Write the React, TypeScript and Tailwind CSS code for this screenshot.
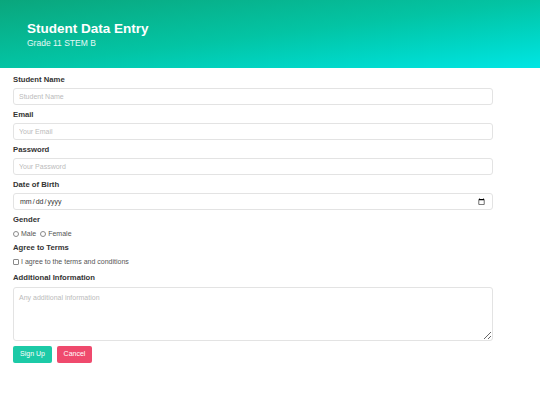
export default function App() {
  return (
    <div className="min-h-[405px] w-[540px] bg-white font-['Liberation_Sans',Arial,sans-serif] text-[#333]">
      {/* header */}
      <header className="flex h-[68px] flex-col justify-center bg-gradient-to-br from-[#0aa67c] via-[#03c4a4] to-[#00e6e4] px-[27px] text-white">
        <h1 className="text-[13.5px] font-bold leading-[17px]">Student Data Entry</h1>
        <p className="mt-[1px] text-[8.5px] leading-[11px] text-white/90">Grade 11 STEM B</p>
      </header>

      <form className="flex w-[506px] flex-col px-[13px] pt-[7px]">
        <Field label="Student Name">
          <input className={inputCls} placeholder="Student Name" />
        </Field>
        <Field label="Email">
          <input className={inputCls} placeholder="Your Email" />
        </Field>
        <Field label="Password">
          <input type="password" className={inputCls} placeholder="Your Password" />
        </Field>
        <Field label="Date of Birth">
          <input type="date" className={inputCls + ' text-[#333]'} />
        </Field>

        <div className="mb-[4px]">
          <Label>Gender</Label>
          <div className="mt-[4px] flex h-[10px] items-center gap-[4px] text-[7px] text-[#555]">
            <label className="flex items-center gap-[2px]">
              <input type="radio" name="g" className={boxCls + ' rounded-full'} /> Male
            </label>
            <label className="flex items-center gap-[2px]">
              <input type="radio" name="g" className={boxCls + ' rounded-full'} /> Female
            </label>
          </div>
        </div>

        <div className="mb-[6px]">
          <Label>Agree to Terms</Label>
          <label className="mt-[4px] flex h-[10px] items-center gap-[2px] text-[7px] text-[#555]">
            <input type="checkbox" className={boxCls + ' rounded-[1px]'} /> I agree to the terms and conditions
          </label>
        </div>

        <div className="mb-[5px]">
          <Label>Additional Information</Label>
          <textarea
            className="mt-[4px] block h-[54px] w-full rounded-[3px] border border-[#e3e3e3] px-[5px] py-[5px] text-[7px] leading-[9px] placeholder:text-[#bbb] outline-none"
            placeholder="Any additional information"
          />
        </div>

        <div className="flex gap-[5px]">
          <button type="button" className="h-[17px] w-[39px] rounded-[2px] bg-[#1ccaa7] text-[7px] text-white">
            Sign Up
          </button>
          <button type="button" className="h-[17px] w-[35px] rounded-[2px] bg-[#ef4a6d] text-[7px] text-white">
            Cancel
          </button>
        </div>
      </form>
    </div>
  )
}

const inputCls =
  'block h-[17px] w-full rounded-[3px] border border-[#e3e3e3] px-[5px] text-[7px] leading-[9px] placeholder:text-[#bbb] outline-none'

const boxCls = 'm-0 h-[6px] w-[6px] appearance-none border border-[#8a8a8a] bg-white'

function Label({ children }: { children: React.ReactNode }) {
  return <div className="h-[10px] text-[7.7px] font-bold leading-[10px] text-[#333]">{children}</div>
}

function Field({ label, children }: { label: string; children: React.ReactNode }) {
  return (
    <div className="mb-[5px]">
      <Label>{label}</Label>
      <div className="mt-[3px]">{children}</div>
    </div>
  )
}
